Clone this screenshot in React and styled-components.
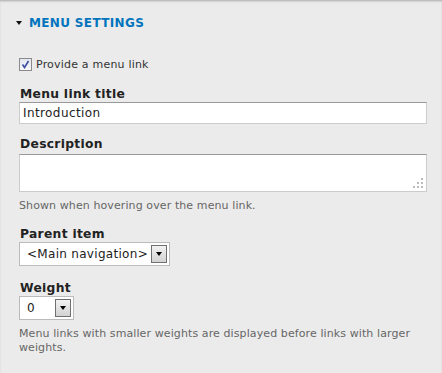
import styled, { createGlobalStyle } from "styled-components";

const Global = createGlobalStyle`
  html, body {
    margin: 0;
    padding: 0;
    background: #ebebeb;
  }
  body {
    font-family: "DejaVu Sans", Verdana, sans-serif;
    color: #333;
  }
`;

const Panel = styled.div`
  width: 442px;
  height: 373px;
  box-sizing: border-box;
  background: #ebebeb;
  border-top: 1px solid #bdbdbd;
  box-shadow: inset 0 1px 2px #d0d0d0;
  padding: 14px 15px 0 19px;
`;

const Legend = styled.div`
  display: flex;
  align-items: center;
  gap: 7px;
  margin-left: -3px;
  font-size: 12px;
  line-height: 16px;
  font-weight: bold;
  color: #0074bd;
  letter-spacing: 0.35px;
`;

const Triangle = styled.span`
  width: 0;
  height: 0;
  border-left: 3.5px solid transparent;
  border-right: 3.5px solid transparent;
  border-top: 4px solid #111;
  margin-top: -1px;
`;

const CheckRow = styled.label`
  display: flex;
  align-items: center;
  gap: 4px;
  height: 13px;
  margin-top: 27px;
  font-size: 11px;
  letter-spacing: 0.2px;
  color: #333;
`;

const Box = styled.span`
  width: 13px;
  height: 13px;
  box-sizing: border-box;
  border: 1px solid #8a8a8a;
  background: linear-gradient(#e4e7f0, #f7f7f9);
  display: flex;
  align-items: center;
  justify-content: center;
`;

const Field = styled.div`
  margin-top: ${(p) => p.$top}px;
`;

const Label = styled.div`
  font-size: 12.3px;
  font-weight: bold;
  letter-spacing: 0.3px;
  color: #222;
  line-height: 15px;
  margin-left: 1px;
`;

const TextInput = styled.div`
  height: 22px;
  box-sizing: border-box;
  background: #fff;
  border: 1px solid #ccc;
  border-top-color: #999;
  font-size: 12px;
  letter-spacing: 0.4px;
  line-height: 20px;
  padding-left: 3px;
  color: #222;
`;

const TextArea = styled.div`
  position: relative;
  margin-top: 2px;
  height: 38px;
  box-sizing: border-box;
  background: #fff;
  border: 1px solid #ccc;
  border-top-color: #999;
`;

const Grip = styled.svg`
  position: absolute;
  right: 3px;
  bottom: 3px;
`;

const Help = styled.div`
  font-size: 11px;
  letter-spacing: 0.1px;
  color: #666;
  line-height: 14px;
  margin-top: 7px;
  padding-right: 4px;
`;

const Select = styled.div`
  width: ${(p) => p.$width}px;
  height: 24px;
  box-sizing: border-box;
  background: #fff;
  border: 1px solid #bbb;
  display: flex;
  align-items: center;
  justify-content: space-between;
  padding: 0 2px 0 7px;
  font-size: 12px;
  letter-spacing: 0.3px;
  color: #222;
`;

const Arrow = styled.span`
  width: 16px;
  height: 18px;
  box-sizing: border-box;
  border: 1px solid #707070;
  background: linear-gradient(#f2f2f2, #d2d2d2);
  display: flex;
  align-items: center;
  justify-content: center;
  &::after {
    content: "";
    border-left: 3.5px solid transparent;
    border-right: 3.5px solid transparent;
    border-top: 4px solid #000;
  }
`;

const dots = [
  [8, 0],
  [4, 4],
  [8, 4],
  [0, 8],
  [4, 8],
  [8, 8],
];

export default function App() {
  return (
    <>
      <Global />
      <Panel>
        <Legend>
          <Triangle />
          MENU SETTINGS
        </Legend>
        <CheckRow>
          <Box>
            <svg width="9" height="9" viewBox="0 0 9 9">
              <path d="M1.5 4.5 L3.5 7.5 L7.5 1" fill="none" stroke="#3c4ea0" strokeWidth="1.6" />
            </svg>
          </Box>
          Provide a menu link
        </CheckRow>
        <Field $top={16}>
          <Label>Menu link title</Label>
          <TextInput>Introduction</TextInput>
        </Field>
        <Field $top={13}>
          <Label>Description</Label>
          <TextArea>
            <Grip width="10" height="10" viewBox="0 0 10 10">
              {dots.map(([x, y]) => (
                <rect key={`${x}-${y}`} x={x} y={y} width="2" height="2" fill="#bbb" />
              ))}
            </Grip>
          </TextArea>
          <Help>Shown when hovering over the menu link.</Help>
        </Field>
        <Field $top={14}>
          <Label>Parent item</Label>
          <Select $width={151}>
            &lt;Main navigation&gt;
            <Arrow />
          </Select>
        </Field>
        <Field $top={15}>
          <Label>Weight</Label>
          <Select $width={55}>
            0
            <Arrow />
          </Select>
          <Help>
            Menu links with smaller weights are displayed before links with larger weights.
          </Help>
        </Field>
      </Panel>
    </>
  );
}
